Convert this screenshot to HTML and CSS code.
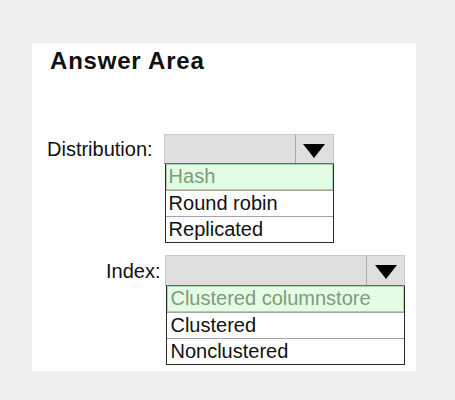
FILE: index.html
```html
<!DOCTYPE html>
<html>
<head>
<meta charset="utf-8">
<link rel="stylesheet" href="styles.css">
</head>
<body>
<div class="panel">
  <h1 class="title">Answer Area</h1>
  <div class="form">
    <div class="field field-dist">
      <span class="label">Distribution:</span>
      <div class="dropdown dropdown-dist">
        <div class="dd-head">
          <div class="dd-value"></div>
          <div class="dd-btn"><span class="tri"></span></div>
        </div>
        <ul class="dd-list">
          <li class="opt opt-sel">Hash</li>
          <li class="opt">Round robin</li>
          <li class="opt">Replicated</li>
        </ul>
      </div>
    </div>
    <div class="field field-index">
      <span class="label">Index:</span>
      <div class="dropdown dropdown-index">
        <div class="dd-head">
          <div class="dd-value"></div>
          <div class="dd-btn"><span class="tri"></span></div>
        </div>
        <ul class="dd-list">
          <li class="opt opt-sel">Clustered columnstore</li>
          <li class="opt">Clustered</li>
          <li class="opt">Nonclustered</li>
        </ul>
      </div>
    </div>
  </div>
</div>
</body>
</html>
```
FILE: styles.css
```css
html, body {
  margin: 0;
  padding: 0;
  background: #efefef;
  font-family: "Liberation Sans", Arial, sans-serif;
  color: #111;
}
body {
  width: 455px;
  height: 400px;
  padding-top: 43px;
  box-sizing: border-box;
}
.panel {
  margin-left: 32px;
  width: 384px;
  height: 328px;
  background: #fff;
}
.title {
  margin: 0;
  padding: 4px 0 0 18px;
  font-size: 24px;
  line-height: 28px;
  letter-spacing: 0.8px;
  font-weight: bold;
}
.form {
  margin-top: 59px;
  display: flex;
  flex-direction: column;
  gap: 12px;
}
.field {
  display: flex;
  align-items: flex-start;
}
.field-dist {
  padding-left: 15px;
  gap: 11px;
}
.field-index {
  padding-left: 74px;
  gap: 5px;
}
.label {
  font-size: 20px;
  line-height: 28px;
  padding-top: 1px;
}
.field-index .label { padding-top: 2px; }
.dropdown-dist { width: 170px; }
.dropdown-index { width: 240px; }
.dd-head {
  display: flex;
  height: 30px;
  box-sizing: border-box;
  background: #dfdfdf;
  border: 1px solid #c9c9c9;
  border-bottom: 1px solid #6a6a6a;
}
.dropdown-index .dd-head { height: 31px; }
.dd-value { flex: 1; }
.dd-btn {
  width: 38px;
  border-left: 1px solid #ababab;
  display: flex;
  align-items: center;
  justify-content: center;
  padding-top: 3px;
  box-sizing: border-box;
}
.tri {
  width: 0;
  height: 0;
  border-left: 11px solid transparent;
  border-right: 11px solid transparent;
  border-top: 14px solid #000;
}
.dd-list {
  list-style: none;
  margin: 0 0 0 1px;
  padding: 0;
  border: 1px solid #2a2a2a;
  border-top: none;
}
.opt {
  height: 26px;
  box-sizing: border-box;
  font-size: 20px;
  line-height: 23px;
  padding-top: 1px;
  padding-left: 3px;
  white-space: nowrap;
  border-top: 1px solid #a3a3a3;
}
.opt:first-child { border-top: none; }
.opt-sel {
  background: #e4fbe4;
  color: #7c9c7c;
  box-shadow: inset 0 0 0 1px #a9d4a9;
}
```
